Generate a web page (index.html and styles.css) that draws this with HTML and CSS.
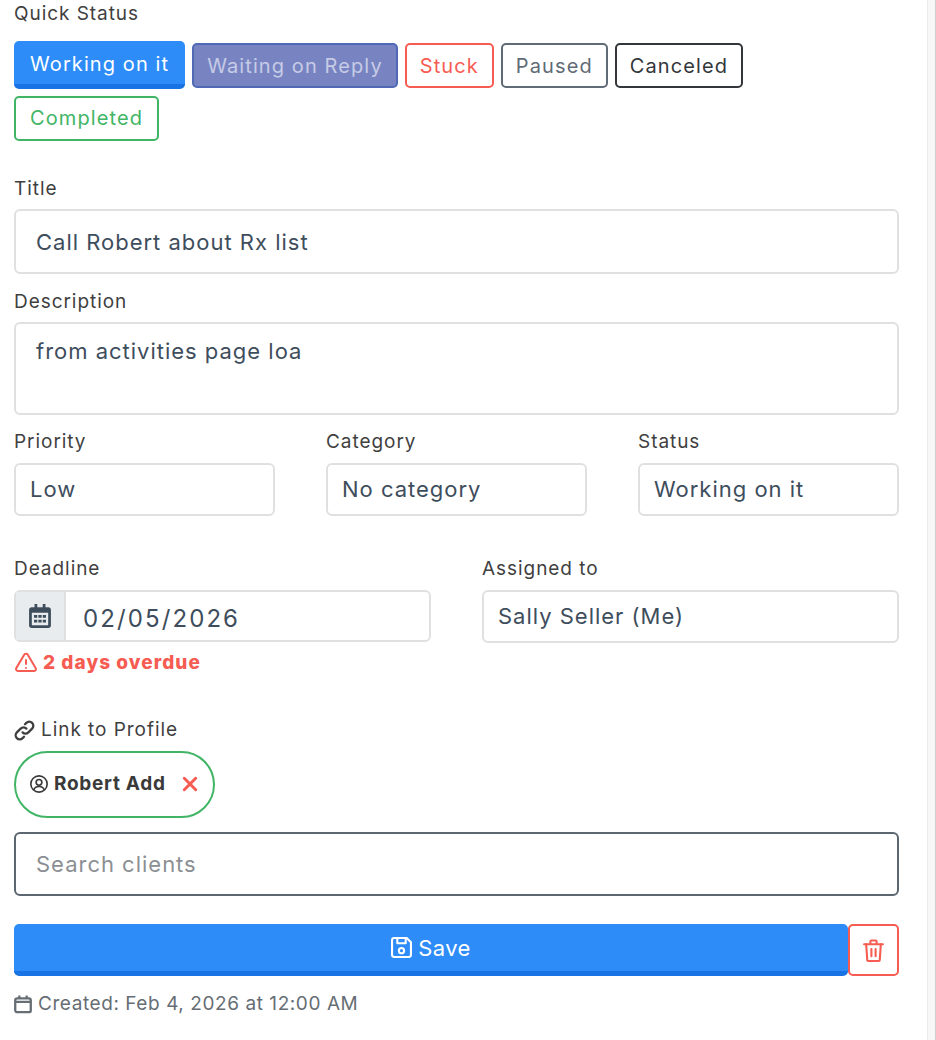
FILE: index.html
```html
<!DOCTYPE html>
<html lang="en">
<head>
    <meta charset="UTF-8">
    <meta name="viewport" content="width=device-width, initial-scale=1.0">
    <title>Edit task</title>
    <link rel="stylesheet" href="styles.css">
</head>
<body>
    <div class="page">
        <form class="task-form">
            <div class="label label-top">Quick Status</div>
            <div class="quick-status">
                <button type="button" class="btn btn-active">Working on it</button>
                <button type="button" class="btn btn-waiting">Waiting on Reply</button>
                <button type="button" class="btn btn-stuck">Stuck</button>
                <button type="button" class="btn btn-paused">Paused</button>
                <button type="button" class="btn btn-canceled">Canceled</button>
                <button type="button" class="btn btn-completed">Completed</button>
            </div>

            <label class="label label-title">Title</label>
            <input class="field field-title" type="text" value="Call Robert about Rx list">

            <label class="label label-desc">Description</label>
            <textarea class="field field-desc">from activities page loa</textarea>

            <div class="row-three">
                <div>
                    <label class="label">Priority</label>
                    <div class="field field-small">Low</div>
                </div>
                <div>
                    <label class="label">Category</label>
                    <div class="field field-small">No category</div>
                </div>
                <div>
                    <label class="label">Status</label>
                    <div class="field field-small">Working on it</div>
                </div>
            </div>

            <div class="row-two">
                <div>
                    <label class="label">Deadline</label>
                    <div class="input-group">
                        <span class="input-addon">
                            <svg class="icon-calendar" viewBox="2 1 20 22" fill="currentColor">
                                <path d="M7 1h2.500v3h5V1H17v3h2.500A2.500 2.500 0 0 1 22 6.500v14a2.500 2.500 0 0 1-2.500 2.500h-15A2.500 2.500 0 0 1 2 20.500v-14A2.500 2.500 0 0 1 4.500 4H7z"/>
                                <path fill="#e9ecef" d="M4.500 9h15v11.500h-15z"/>
                                <path d="M6.500 11h3v2.500h-3zM10.500 11h3v2.500h-3zM14.500 11h3v2.500h-3zM6.500 15.500h3V18h-3zM10.500 15.500h3V18h-3zM14.500 15.500h3V18h-3z"/>
                            </svg>
                        </span>
                        <span class="date-value">02/05/2026</span>
                    </div>
                    <div class="overdue">
                        <svg class="icon-warn" viewBox="0 0 24 24" fill="none" stroke="currentColor" stroke-width="2" stroke-linecap="round" stroke-linejoin="round">
                            <path d="M12 9v4M12 17h.01"/>
                            <path d="M10.360 3.600l-8.100 13.530a1.910 1.910 0 0 0 1.640 2.870h16.200a1.910 1.910 0 0 0 1.640-2.870l-8.100-13.530a1.910 1.910 0 0 0-3.280 0z"/>
                        </svg>
                        <span>2 days overdue</span>
                    </div>
                </div>
                <div>
                    <label class="label">Assigned to</label>
                    <div class="field field-small">Sally Seller (Me)</div>
                </div>
            </div>

            <label class="label label-link">
                <svg class="icon-link" viewBox="1 1 22 22" fill="none" stroke="currentColor" stroke-width="2.400" stroke-linecap="round" stroke-linejoin="round">
                    <path d="M10 14a4.200 4.200 0 0 0 6 0l4-4a4.200 4.200 0 0 0-6-6l-1.500 1.500"/>
                    <path d="M14 10a4.200 4.200 0 0 0-6 0l-4 4a4.200 4.200 0 0 0 6 6l1.500-1.500"/>
                </svg>
                Link to Profile
            </label>
            <div class="chip">
                <svg class="icon-user" viewBox="1 1 22 22" fill="none" stroke="currentColor" stroke-width="2">
                    <circle cx="12" cy="12" r="10"/>
                    <circle cx="12" cy="10" r="3.500"/>
                    <path d="M5.500 19.500c1-3.500 3.500-4.500 6.500-4.500s5.500 1 6.500 4.500"/>
                </svg>
                <span class="chip-name">Robert Add</span>
                <svg class="icon-x" viewBox="0 0 14 14" fill="none" stroke="currentColor" stroke-width="2.600" stroke-linecap="round">
                    <path d="M2 2l10 10M12 2L2 12"/>
                </svg>
            </div>
            <input class="field field-search" type="text" placeholder="Search clients">

            <div class="actions">
                <button type="button" class="btn-save">
                    <svg class="icon-save" viewBox="2 2 20 20" fill="none" stroke="currentColor" stroke-width="2" stroke-linejoin="round">
                        <path d="M5 3h12l4 4v12a2 2 0 0 1-2 2H5a2 2 0 0 1-2-2V5a2 2 0 0 1 2-2z"/>
                        <path d="M8 3v5h8V3"/>
                        <circle cx="12" cy="15" r="2.500"/>
                    </svg>
                    Save
                </button>
                <button type="button" class="btn-delete">
                    <svg class="icon-trash" viewBox="2 1 20 22" fill="none" stroke="currentColor" stroke-width="2" stroke-linecap="round" stroke-linejoin="round">
                        <path d="M3 6h18M9 6V3.500a1 1 0 0 1 1-1h4a1 1 0 0 1 1 1V6"/>
                        <path d="M5 6l1 15a1 1 0 0 0 1 1h10a1 1 0 0 0 1-1l1-15"/>
                        <path d="M10 10.500v7M14 10.500v7"/>
                    </svg>
                </button>
            </div>

            <div class="created">
                <svg class="icon-created" viewBox="1 1 22 22" fill="none" stroke="currentColor" stroke-width="2.800" stroke-linejoin="round">
                    <rect x="2.500" y="5" width="19" height="17" rx="2.500"/>
                    <path d="M7.500 1.500v4M16.500 1.500v4M2.500 9.500h19"/>
                </svg>
                Created: Feb 4, 2026 at 12:00 AM
            </div>
        </form>
        <div class="scroll-track"></div>
    </div>
</body>
</html>
```

FILE: styles.css
```css
* {
    margin: 0;
    padding: 0;
    box-sizing: border-box;
}

html, body {
    height: 1040px;
    overflow: hidden;
}

body {
    font-family: Inter, 'Open Sans', sans-serif;
    letter-spacing: 0.045em;
    background: white;
    color: #3a3a3a;
}

.page {
    display: flex;
    height: 1040px;
}

.task-form {
    flex: 1;
    padding: 0 28px 0 14px;
}

.scroll-track {
    width: 9px;
    background: #f7f7f7;
    border-left: 1px solid #ececec;
    border-right: 1px solid #d0d0d0;
}

.label {
    display: block;
    padding-top: 2px;
    font-size: 19px;
    line-height: 24px;
    color: #3f3f3f;
    letter-spacing: 0.05em;
}

.label-top {
    margin-bottom: 15px;
}

/* quick status buttons */
.quick-status {
    display: flex;
    flex-wrap: wrap;
    align-items: flex-start;
    gap: 7px;
    max-width: 780px;
}

.btn {
    height: 45px;
    margin-top: 2px;
    padding: 0 13px;
    font-family: inherit;
    font-size: 20px;
    letter-spacing: 0.055em;
    background: white;
    border: 2px solid;
    border-radius: 5px;
}

.btn-active {
    height: 48px;
    margin-top: 0;
    padding: 2px 16px 0;
    color: white;
    background: #2d8cf8;
    border: none;
    border-bottom: 5px solid #1a73e4;
}

.btn-waiting {
    color: #c6cbe6;
    background: #7884c2;
    border-color: #5068b5;
}

.btn-stuck {
    color: #f65c52;
    border-color: #f65c52;
}

.btn-paused {
    color: #5f6b76;
    border-color: #5f6b76;
}

.btn-canceled {
    color: #33373b;
    border-color: #33373b;
}

.btn-completed {
    margin-top: 0;
    padding: 0 14px 2px;
    color: #41b565;
    border-color: #41b565;
}

/* fields */
.field {
    display: block;
    width: 100%;
    font-family: inherit;
    letter-spacing: 0.045em;
    color: #3e4d5c;
    background: white;
    border: 2px solid #e0e0e0;
    border-radius: 6px;
    outline: none;
}

.label-title {
    margin-top: 34px;
    margin-bottom: 8px;
}

.field-title {
    height: 65px;
    padding: 0 20px;
    font-size: 22px;
}

.label-desc {
    margin-top: 14px;
    margin-bottom: 8px;
}

.field-desc {
    height: 93px;
    padding: 12px 20px;
    font-size: 22px;
    line-height: 30px;
    resize: none;
}

.field-small {
    height: 53px;
    padding: 0 14px;
    font-size: 22px;
    line-height: 49px;
}

.row-three {
    display: grid;
    grid-template-columns: repeat(3, 261px);
    justify-content: space-between;
    margin-top: 13px;
}

.row-three .label,
.row-two .label {
    margin-bottom: 9px;
}

.row-two {
    display: grid;
    grid-template-columns: repeat(2, 417px);
    justify-content: space-between;
    margin-top: 39px;
}

.input-group {
    display: flex;
    height: 52px;
    border: 2px solid #e0e0e0;
    border-radius: 6px;
}

.input-addon {
    display: flex;
    align-items: center;
    justify-content: center;
    width: 50px;
    color: #3e4d5c;
    background: #e9ecef;
    border-right: 2px solid #e0e0e0;
}

.icon-calendar {
    width: 22px;
    height: 24px;
}

.date-value {
    padding-left: 17px;
    font-size: 24px;
    line-height: 53px;
    color: #3e4d5c;
    letter-spacing: 2.1px;
}

.overdue {
    display: flex;
    align-items: center;
    gap: 5px;
    margin-top: 9px;
    font-size: 19px;
    font-weight: 800;
    line-height: 24px;
    letter-spacing: 0.055em;
    color: #f65c52;
}

.icon-warn {
    width: 24px;
    height: 24px;
}

.label-link {
    display: flex;
    align-items: center;
    gap: 6px;
    margin-top: 41px;
    margin-bottom: 9px;
}

.icon-link {
    width: 21px;
    height: 21px;
}

.chip {
    display: inline-flex;
    align-items: center;
    height: 67px;
    padding: 0 15px 2px 14px;
    border: 2px solid #41b565;
    border-radius: 34px;
    vertical-align: top;
}

.icon-user {
    width: 18px;
    height: 18px;
    margin-right: 6px;
}

.chip-name {
    font-size: 19px;
    font-weight: 700;
    margin-right: 16px;
}

.icon-x {
    width: 16px;
    height: 16px;
    color: #f65c52;
}

.field-search {
    height: 64px;
    margin-top: 14px;
    padding: 0 20px;
    font-size: 22px;
    border-color: #5b6671;
}

.field-search::placeholder {
    color: #8b8f93;
}

/* save row */
.actions {
    display: flex;
    margin-top: 28px;
}

.btn-save {
    flex: 1;
    display: flex;
    align-items: center;
    justify-content: center;
    gap: 6px;
    height: 52px;
    font-family: inherit;
    font-size: 22px;
    letter-spacing: 0.02em;
    color: white;
    background: #2d8cf8;
    border: none;
    border-bottom: 5px solid #1a73e4;
    border-radius: 5px;
}

.icon-save {
    width: 21px;
    height: 21px;
}

.btn-delete {
    display: flex;
    align-items: center;
    justify-content: center;
    width: 51px;
    height: 52px;
    color: #f65c52;
    background: white;
    border: 2px solid #f65c52;
    border-radius: 5px;
}

.icon-trash {
    width: 21px;
    height: 23px;
}

.created {
    display: flex;
    align-items: center;
    gap: 6px;
    margin-top: 15px;
    font-size: 19px;
    line-height: 26px;
    letter-spacing: 0.03em;
    color: #666d74;
}

.icon-created {
    width: 18px;
    height: 20px;
}
```
